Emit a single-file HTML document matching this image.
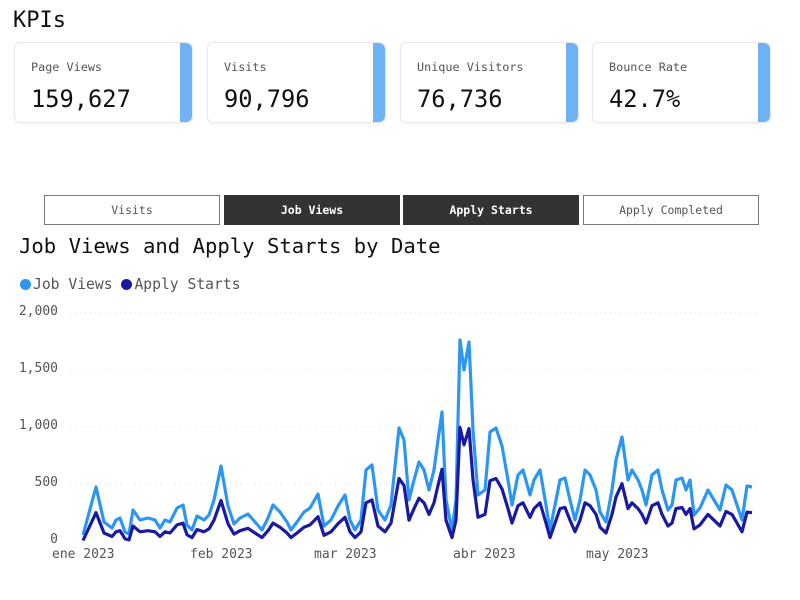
<!DOCTYPE html>
<html><head><meta charset="utf-8"><style>
body{margin:0;width:800px;height:600px;background:#fff;font-family:"DejaVu Sans Mono","Liberation Mono",monospace;position:relative;overflow:hidden;color:#111}
.t{position:absolute;left:13px;top:8px;font-size:22px}
.card{position:absolute;top:42px;width:179px;height:81px;border:1px solid #e8e8ee;border-radius:6px;box-sizing:border-box;overflow:hidden;box-shadow:0 1px 2px rgba(0,0,0,.05)}
.card .bar{position:absolute;right:0;top:0;bottom:0;width:12px;background:#6fb3f7;border-radius:0 6px 6px 0}
.card .l{position:absolute;left:16px;top:17px;font-size:11.8px;color:#555}
.card .v{position:absolute;left:16px;top:42px;font-size:23.7px;color:#111}
.tab{position:absolute;top:195px;height:30px;width:176px;box-sizing:border-box;border:1px solid #777;font-size:11.5px;text-align:center;line-height:28px;color:#555}
.tab.d{background:#333;color:#fff;font-weight:bold;border-color:#333}
.h{position:absolute;left:19px;top:234px;font-size:20.6px}
.lg{position:absolute;left:20px;top:276px;font-size:14.7px;color:#555}
.dot{display:inline-block;width:11px;height:11px;border-radius:50%;vertical-align:-1px;margin-right:2px}
.yl{position:absolute;right:742px;font-size:13px;color:#555}
.xl{position:absolute;top:547px;font-size:13px;color:#555}
</style></head><body>
<div class="t">KPIs</div>
<div class="card" style="left:14px"><div class="l">Page Views</div><div class="v">159,627</div><div class="bar"></div></div>
<div class="card" style="left:207px"><div class="l">Visits</div><div class="v">90,796</div><div class="bar"></div></div>
<div class="card" style="left:400px"><div class="l">Unique Visitors</div><div class="v">76,736</div><div class="bar"></div></div>
<div class="card" style="left:592px"><div class="l">Bounce Rate</div><div class="v">42.7%</div><div class="bar"></div></div>
<div class="tab" style="left:44px">Visits</div>
<div class="tab d" style="left:224px">Job Views</div>
<div class="tab d" style="left:403px">Apply Starts</div>
<div class="tab" style="left:583px">Apply Completed</div>
<div class="h">Job Views and Apply Starts by Date</div>
<div class="lg"><span class="dot" style="background:#2d96f0"></span>Job Views <span class="dot" style="background:#1a1aa0"></span>Apply Starts</div>
<div class="yl" style="top:304px">2,000</div>
<div class="yl" style="top:361px">1,500</div>
<div class="yl" style="top:418px">1,000</div>
<div class="yl" style="top:475px">500</div>
<div class="yl" style="top:532px">0</div>
<div class="xl" style="left:52px">ene 2023</div>
<div class="xl" style="left:190px">feb 2023</div>
<div class="xl" style="left:314px">mar 2023</div>
<div class="xl" style="left:453px">abr 2023</div>
<div class="xl" style="left:586px">may 2023</div>
<svg width="800" height="600" style="position:absolute;left:0;top:0">
<g stroke="#ddd" stroke-width="1" stroke-dasharray="1,4">
<line x1="70" x2="760" y1="313" y2="313"/><line x1="70" x2="760" y1="370" y2="370"/><line x1="70" x2="760" y1="427" y2="427"/><line x1="70" x2="760" y1="484" y2="484"/>
</g>
<polyline id="a" fill="none" stroke="#2d96f0" stroke-width="3.2" stroke-linejoin="round"/>
<polyline id="b" fill="none" stroke="#1a1aa0" stroke-width="3.2" stroke-linejoin="round"/>
</svg>
<script>
var p=[83,535,96,487,104,522,112,528,116,520,120,518,125,532,129,534,133,510,140,520,148,518,155,520,160,528,165,520,170,522,177,508,183,505,187,525,192,530,197,516,204,520,209,515,214,500,221,466,228,506,234,524,240,518,248,514,255,522,262,530,268,518,273,505,280,512,287,522,291,530,297,522,304,512,310,508,318,494,324,526,331,520,338,506,345,495,350,520,355,530,361,520,366,470,372,465,378,510,385,520,391,505,399,428,404,440,409,500,414,480,419,462,424,470,429,490,434,470,438,440,442,412,446,500,452,530,456,500,460,340,464,370,469,342,473,430,478,495,485,490,490,432,496,428,502,446,508,480,512,505,518,475,523,470,530,495,534,480,540,470,546,505,550,530,556,500,560,480,565,478,570,500,575,520,580,500,585,470,590,475,596,490,600,512,606,522,612,490,616,460,622,437,628,480,632,470,638,480,642,490,646,505,652,475,658,470,662,490,668,510,672,505,676,480,682,478,686,490,690,480,694,515,700,508,708,490,714,500,720,510,726,485,732,490,737,505,742,520,747,486,752,487];
var a=[],b=[];
for(var i=0;i<p.length;i+=2){a.push(p[i]+','+p[i+1]);b.push(p[i]+','+(541-(541-p[i+1])*0.58+3).toFixed(1));}
document.getElementById('a').setAttribute('points',a.join(' '));
document.getElementById('b').setAttribute('points',b.join(' '));
</script>
</body></html>
